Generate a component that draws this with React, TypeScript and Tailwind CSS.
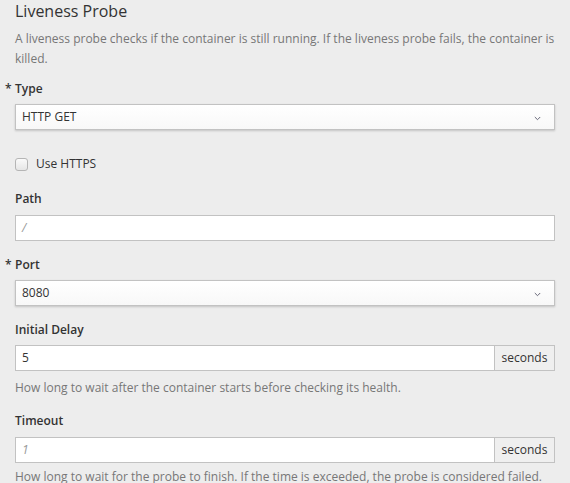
import React from "react";

function Chevron() {
  return (
    <svg width="7" height="5" viewBox="0 0 7 5" className="absolute right-[13px] top-[11px]">
      <path d="M0.8 1 L3.5 3.7 L6.2 1" fill="none" stroke="#667" strokeWidth="1" />
    </svg>
  );
}

function Label({ text, required }: { text: string; required?: boolean }) {
  return (
    <div className="relative h-[20px] leading-[20px] text-[12px] font-semibold text-[#333]">
      {required && <span className="absolute left-[-10px] top-0">*</span>}
      {text}
    </div>
  );
}

function SelectBox({ value }: { value: string }) {
  return (
    <div className="relative mt-[5px] h-[26px] border border-[#c2c2c2] bg-gradient-to-b from-white to-[#f8f8f8] shadow-[0_1px_2px_rgba(0,0,0,0.18)] pl-[6px] leading-[24px] text-[12px] text-[#333]">
      {value}
      <Chevron />
    </div>
  );
}

function TextBox({ value, placeholder, italic }: { value?: string; placeholder?: string; italic?: boolean }) {
  return (
    <div className="mt-[6px] h-[26px] border border-[#c2c2c2] bg-white pl-[6px] leading-[24px] text-[12px]">
      {value ? (
        <span className="text-[#333]">{value}</span>
      ) : (
        <span className={"text-[#999] " + (italic ? "italic" : "")}>{placeholder}</span>
      )}
    </div>
  );
}

function AddonBox({ value, placeholder, top }: { value?: string; placeholder?: string; top: string }) {
  return (
    <div className={"flex h-[26px] text-[12px] " + top}>
      <div className="flex-1 border border-[#c2c2c2] bg-white pl-[6px] leading-[24px]">
        {value ? (
          <span className="text-[#333]">{value}</span>
        ) : (
          <span className="italic text-[#999]">{placeholder}</span>
        )}
      </div>
      <div className="w-[60px] border border-l-0 border-[#c2c2c2] bg-[#efefef] text-center leading-[24px] text-[#333]">
        seconds
      </div>
    </div>
  );
}

export default function App() {
  return (
    <div
      className="min-h-[483px] w-[570px] bg-[#ededed] px-[15px]"
      style={{ fontFamily: '"Open Sans", "Noto Sans", sans-serif' }}
    >
      <div className="h-[22px] leading-[22px] text-[16px] text-[#333]">Liveness Probe</div>
      <div className="mt-[7px] text-[12px] leading-[20px] text-[#777]">
        A liveness probe checks if the container is still running. If the liveness probe fails, the container is killed.
      </div>
      <div className="mt-[10px]">
        <Label text="Type" required />
        <SelectBox value="HTTP GET" />
      </div>
      <div className="mt-[24px] flex h-[20px] items-center text-[12px] text-[#333]">
        <span className="mr-[8px] inline-block h-[13px] w-[13px] rounded-[3px] border border-[#b5b5b5] bg-gradient-to-b from-[#fafafa] to-[#e6e6e6]" />
        Use HTTPS
      </div>
      <div className="mt-[15px]">
        <Label text="Path" />
        <TextBox placeholder="/" italic />
      </div>
      <div className="mt-[14px]">
        <Label text="Port" required />
        <SelectBox value="8080" />
      </div>
      <div className="mt-[14px]">
        <Label text="Initial Delay" />
        <AddonBox value="5" top="mt-[5px]" />
        <div className="mt-[7px] text-[12px] leading-[20px] text-[#777]">
          How long to wait after the container starts before checking its health.
        </div>
      </div>
      <div className="mt-[13px]">
        <Label text="Timeout" />
        <AddonBox placeholder="1" top="mt-[6px]" />
        <div className="mt-[4px] text-[12px] leading-[20px] text-[#777]">
          How long to wait for the probe to finish. If the time is exceeded, the probe is considered failed.
        </div>
      </div>
    </div>
  );
}
